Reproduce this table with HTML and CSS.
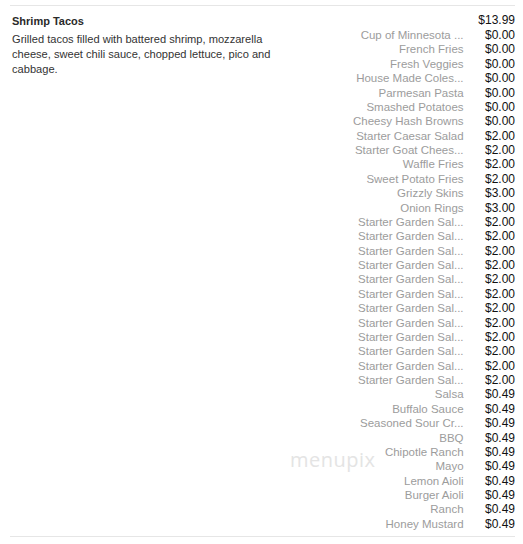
FILE: index.html
```html
<!DOCTYPE html>
<html>
<head>
<meta charset="utf-8">
<link rel="stylesheet" href="styles.css">
</head>
<body>
<div class="menu">
  <div class="item">
    <div class="info">
      <div class="title">Shrimp Tacos</div>
      <div class="desc">Grilled tacos filled with battered shrimp, mozzarella cheese, sweet chili sauce, chopped lettuce, pico and cabbage.</div>
    </div>
    <div class="prices">
      <div class="row main"><span class="name"></span><span class="price">$13.99</span></div>
      <div class="row"><span class="name">Cup of Minnesota ...</span><span class="price">$0.00</span></div>
      <div class="row"><span class="name">French Fries</span><span class="price">$0.00</span></div>
      <div class="row"><span class="name">Fresh Veggies</span><span class="price">$0.00</span></div>
      <div class="row"><span class="name">House Made Coles...</span><span class="price">$0.00</span></div>
      <div class="row"><span class="name">Parmesan Pasta</span><span class="price">$0.00</span></div>
      <div class="row"><span class="name">Smashed Potatoes</span><span class="price">$0.00</span></div>
      <div class="row"><span class="name">Cheesy Hash Browns</span><span class="price">$0.00</span></div>
      <div class="row"><span class="name">Starter Caesar Salad</span><span class="price">$2.00</span></div>
      <div class="row"><span class="name">Starter Goat Chees...</span><span class="price">$2.00</span></div>
      <div class="row"><span class="name">Waffle Fries</span><span class="price">$2.00</span></div>
      <div class="row"><span class="name">Sweet Potato Fries</span><span class="price">$2.00</span></div>
      <div class="row"><span class="name">Grizzly Skins</span><span class="price">$3.00</span></div>
      <div class="row"><span class="name">Onion Rings</span><span class="price">$3.00</span></div>
      <div class="row"><span class="name">Starter Garden Sal...</span><span class="price">$2.00</span></div>
      <div class="row"><span class="name">Starter Garden Sal...</span><span class="price">$2.00</span></div>
      <div class="row"><span class="name">Starter Garden Sal...</span><span class="price">$2.00</span></div>
      <div class="row"><span class="name">Starter Garden Sal...</span><span class="price">$2.00</span></div>
      <div class="row"><span class="name">Starter Garden Sal...</span><span class="price">$2.00</span></div>
      <div class="row"><span class="name">Starter Garden Sal...</span><span class="price">$2.00</span></div>
      <div class="row"><span class="name">Starter Garden Sal...</span><span class="price">$2.00</span></div>
      <div class="row"><span class="name">Starter Garden Sal...</span><span class="price">$2.00</span></div>
      <div class="row"><span class="name">Starter Garden Sal...</span><span class="price">$2.00</span></div>
      <div class="row"><span class="name">Starter Garden Sal...</span><span class="price">$2.00</span></div>
      <div class="row"><span class="name">Starter Garden Sal...</span><span class="price">$2.00</span></div>
      <div class="row"><span class="name">Starter Garden Sal...</span><span class="price">$2.00</span></div>
      <div class="row"><span class="name">Salsa</span><span class="price">$0.49</span></div>
      <div class="row"><span class="name">Buffalo Sauce</span><span class="price">$0.49</span></div>
      <div class="row"><span class="name">Seasoned Sour Cr...</span><span class="price">$0.49</span></div>
      <div class="row"><span class="name">BBQ</span><span class="price">$0.49</span></div>
      <div class="row"><span class="name">Chipotle Ranch</span><span class="price">$0.49</span></div>
      <div class="row"><span class="name">Mayo</span><span class="price">$0.49</span></div>
      <div class="row"><span class="name">Lemon Aioli</span><span class="price">$0.49</span></div>
      <div class="row"><span class="name">Burger Aioli</span><span class="price">$0.49</span></div>
      <div class="row"><span class="name">Ranch</span><span class="price">$0.49</span></div>
      <div class="row"><span class="name">Honey Mustard</span><span class="price">$0.49</span></div>
    </div>
  </div>
  <div class="watermark">menupix</div>
</div>
</body>
</html>
```

FILE: styles.css
```css
html, body {
  margin: 0;
  padding: 0;
  background: #fff;
}
body {
  font-family: "Liberation Sans", Arial, sans-serif;
  color: #333;
}
.menu {
  position: relative;
  padding: 5px 8px 0 10px;
}
.item {
  display: flex;
  justify-content: space-between;
  border-top: 1px solid #e6e6e6;
  border-bottom: 1px solid #e6e6e6;
  padding: 7px 0 5px 2px;
}
.info {
  width: 280px;
}
.title {
  font-size: 11px;
  font-weight: bold;
  color: #2a2a2a;
  line-height: 16px;
}
.desc {
  font-size: 11.1px;
  line-height: 15px;
  color: #333;
  margin-top: 3px;
}
.prices {
  display: flex;
  flex-direction: column;
  width: 162px;
}
.row {
  display: flex;
  justify-content: flex-end;
  font-size: 11.5px;
  line-height: 14.38px;
  gap: 10px;
}
.row.main {
  line-height: 15px;
}
.name {
  width: 112px;
  text-align: right;
  white-space: nowrap;
  overflow: hidden;
  color: #9c9c9c;
}
.price {
  width: 42px;
  text-align: right;
  color: #111;
  font-size: 12px;
}
.watermark {
  position: absolute;
  left: 290px;
  top: 446px;
  font-size: 20px;
  color: #e4e4e4;
  letter-spacing: 0.5px;
  font-family: "Open Sans", sans-serif;
}
```
